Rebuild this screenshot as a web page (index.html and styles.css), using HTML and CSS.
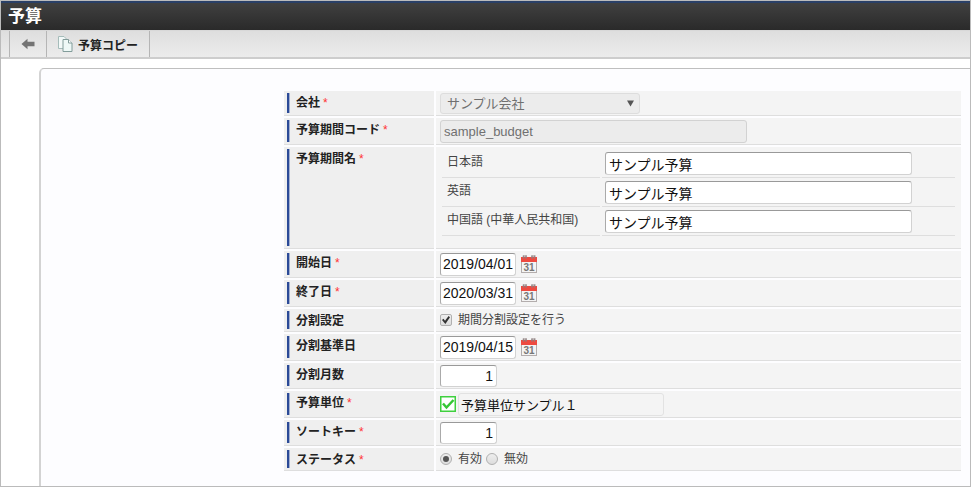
FILE: index.html
```
<!DOCTYPE html>
<html lang="ja">
<head>
    <meta charset="UTF-8">
    <meta name="viewport" content="width=device-width, initial-scale=1.0">
    <title>予算</title>
    <link rel="stylesheet" href="styles.css">
</head>
<body>
    <header class="title-bar">
        <h1>予算</h1>
    </header>

    <nav class="toolbar">
        <button type="button" class="btn-back" aria-label="戻る">
            <svg width="14" height="12" viewBox="0 0 14 12"><path d="M0.5 6L6.5 0.7V3.7H13.5V8.3H6.5V11.3Z" fill="#747474"/></svg>
        </button>
        <button type="button" class="btn-copy">
            <svg width="15" height="16" viewBox="0 0 15 16">
                <path d="M0.5 0.5h5.5l3 3v9h-8.5z" fill="#f3f9f8" stroke="#a5bcba"/>
                <path d="M5 3.5h5.5l3.5 3.5v8.5h-9z" fill="#eef8f6" stroke="#829c9a"/>
                <path d="M10.5 3.5v3.5h3.5" fill="#fff" stroke="#829c9a"/>
            </svg>
            <span>予算コピー</span>
        </button>
    </nav>

    <main class="panel">
        <form>
            <table class="form-table">
                <tr class="row-short">
                    <th><label for="company">会社</label><span class="required">*</span></th>
                    <td>
                        <span class="select-box">
                            <select id="company" disabled>
                                <option>サンプル会社</option>
                            </select>
                            <svg width="7" height="7" viewBox="0 0 7 7"><path d="M0 0.5H7L3.5 6.5Z" fill="#555"/></svg>
                        </span>
                    </td>
                </tr>
                <tr>
                    <th><label for="periodCode">予算期間コード</label><span class="required">*</span></th>
                    <td><input type="text" id="periodCode" class="input-long" value="sample_budget" disabled></td>
                </tr>
                <tr>
                    <th>予算期間名<span class="required">*</span></th>
                    <td class="cell-locale">
                        <table class="locale-table">
                            <tr>
                                <td><label for="nameJa">日本語</label></td>
                                <td><input type="text" id="nameJa" class="input-long" value="サンプル予算"></td>
                            </tr>
                            <tr>
                                <td><label for="nameEn">英語</label></td>
                                <td><input type="text" id="nameEn" class="input-long" value="サンプル予算"></td>
                            </tr>
                            <tr>
                                <td><label for="nameZh">中国語 (中華人民共和国)</label></td>
                                <td><input type="text" id="nameZh" class="input-long" value="サンプル予算"></td>
                            </tr>
                        </table>
                    </td>
                </tr>
                <tr>
                    <th><label for="startDate">開始日</label><span class="required">*</span></th>
                    <td>
                        <div class="field">
                            <input type="text" id="startDate" class="input-date" value="2019/04/01">
                            <button type="button" class="btn-icon" aria-label="カレンダー">
                                <svg width="16" height="18" viewBox="0 0 16 18">
                                    <rect x="0.5" y="3.5" width="15" height="14" fill="#f4f4f4" stroke="#b3adad"/>
                                    <rect x="0" y="2" width="16" height="5" fill="#ee4a40"/>
                                    <path d="M2.5 0.5v3M5 0.5v3M11 0.5v3M13.5 0.5v3" stroke="#8d8080" stroke-width="1.5"/>
                                    <path d="M2 1h4M10.5 1h4" stroke="#a39797"/>
                                    <text class="calendar-day" x="8" y="16" text-anchor="middle">31</text>
                                </svg>
                            </button>
                        </div>
                    </td>
                </tr>
                <tr>
                    <th><label for="endDate">終了日</label><span class="required">*</span></th>
                    <td>
                        <div class="field">
                            <input type="text" id="endDate" class="input-date" value="2020/03/31">
                            <button type="button" class="btn-icon" aria-label="カレンダー">
                                <svg width="16" height="18" viewBox="0 0 16 18">
                                    <rect x="0.5" y="3.5" width="15" height="14" fill="#f4f4f4" stroke="#b3adad"/>
                                    <rect x="0" y="2" width="16" height="5" fill="#ee4a40"/>
                                    <path d="M2.5 0.5v3M5 0.5v3M11 0.5v3M13.5 0.5v3" stroke="#8d8080" stroke-width="1.5"/>
                                    <path d="M2 1h4M10.5 1h4" stroke="#a39797"/>
                                    <text class="calendar-day" x="8" y="16" text-anchor="middle">31</text>
                                </svg>
                            </button>
                        </div>
                    </td>
                </tr>
                <tr class="row-choice">
                    <th>分割設定</th>
                    <td>
                        <div class="field choice">
                            <input type="checkbox" id="split" checked>
                            <label for="split">期間分割設定を行う</label>
                        </div>
                    </td>
                </tr>
                <tr>
                    <th><label for="splitDate">分割基準日</label></th>
                    <td>
                        <div class="field">
                            <input type="text" id="splitDate" class="input-date" value="2019/04/15">
                            <button type="button" class="btn-icon" aria-label="カレンダー">
                                <svg width="16" height="18" viewBox="0 0 16 18">
                                    <rect x="0.5" y="3.5" width="15" height="14" fill="#f4f4f4" stroke="#b3adad"/>
                                    <rect x="0" y="2" width="16" height="5" fill="#ee4a40"/>
                                    <path d="M2.5 0.5v3M5 0.5v3M11 0.5v3M13.5 0.5v3" stroke="#8d8080" stroke-width="1.5"/>
                                    <path d="M2 1h4M10.5 1h4" stroke="#a39797"/>
                                    <text class="calendar-day" x="8" y="16" text-anchor="middle">31</text>
                                </svg>
                            </button>
                        </div>
                    </td>
                </tr>
                <tr class="row-number">
                    <th><label for="splitMonths">分割月数</label></th>
                    <td><input type="text" id="splitMonths" class="input-number" value="1"></td>
                </tr>
                <tr>
                    <th><label for="budgetUnit">予算単位</label><span class="required">*</span></th>
                    <td>
                        <div class="field unit">
                            <button type="button" class="btn-icon" aria-label="予算単位を選択">
                                <svg width="16" height="16" viewBox="0 0 16 16">
                                    <rect x="0.75" y="0.75" width="14.5" height="14.5" fill="#fff" stroke="#3fd03f" stroke-width="1.5"/>
                                    <path d="M3 7.5L6.5 11.5L13.5 4" fill="none" stroke="#35c635" stroke-width="2.5"/>
                                </svg>
                            </button>
                            <input type="text" id="budgetUnit" class="input-unit" value="予算単位サンプル１" readonly>
                        </div>
                    </td>
                </tr>
                <tr class="row-number">
                    <th><label for="sortKey">ソートキー</label><span class="required">*</span></th>
                    <td><input type="text" id="sortKey" class="input-number" value="1"></td>
                </tr>
                <tr class="row-choice">
                    <th>ステータス<span class="required">*</span></th>
                    <td>
                        <div class="field choice">
                            <input type="radio" name="status" id="statusOn" checked>
                            <label for="statusOn">有効</label>
                            <input type="radio" name="status" id="statusOff">
                            <label for="statusOff">無効</label>
                        </div>
                    </td>
                </tr>
            </table>
        </form>
    </main>
</body>
</html>
```

FILE: styles.css
```
* {
    box-sizing: border-box;
}
body {
    display: flex;
    flex-direction: column;
    min-height: 100vh;
    margin: 0;
    border: 1px solid #bbb;
    background-color: #fff;
    color: #444;
    font-family: "Liberation Sans", "Noto Sans CJK JP", sans-serif;
    font-size: 12px;
    line-height: 16px;
}
button, input, select {
    margin: 0;
    font-family: inherit;
    font-size: 14px;
}
svg {
    display: block;
    flex: none;
}
.calendar-day {
    font-size: 10px;
    font-weight: bold;
    fill: #777;
}

/* ヘッダー */
.title-bar {
    border-top: 2px solid #2a4067;
    background: linear-gradient(#404040, #2a2a2a);
}
.title-bar h1 {
    margin: 0;
    padding: 0 7px;
    color: #fff;
    font-size: 17px;
    line-height: 27px;
}
.toolbar {
    display: flex;
    height: 29px;
    padding-left: 8px;
    border-top: 1px solid #d8d8d8;
    border-bottom: 2px solid #cdcdcd;
    background: linear-gradient(#dedede, #ececec);
}
.toolbar button {
    display: flex;
    align-items: center;
    border: none;
    border-right: 1px solid #b5b5b5;
    background: none;
    color: #222;
    font-size: 12px;
    font-weight: bold;
    cursor: pointer;
}
.toolbar .btn-back {
    padding: 0 11px;
    border-left: 1px solid #b5b5b5;
}
.toolbar .btn-copy {
    gap: 5px;
    padding: 0 11px;
}

/* 入力フォーム */
.panel {
    flex: 1;
    margin: 9px 0 0 38px;
    padding: 20px 7px 10px 241px;
    border: 1px solid #bfbfbf;
    border-left: 2px solid #d3d3d3;
    border-right: none;
    border-bottom: none;
    border-radius: 5px 0 0 0;
    background-color: #fdfdff;
}
.form-table {
    width: 100%;
    border-spacing: 2px;
    table-layout: fixed;
}
.form-table th {
    width: 150px;
    padding: 4px 0 0 12px;
    border-bottom: 1px solid #dedede;
    background: linear-gradient(90deg, #2b4a97 2px, #a3b0d0 2px) 3px 2px / 3px calc(100% - 4px) no-repeat #efefef;
    color: #222;
    text-align: left;
    vertical-align: top;
}
.form-table td {
    height: 27px;
    padding: 0 4px;
    border-bottom: 1px solid #dedede;
    background-color: #f4f4f4;
    vertical-align: middle;
}
.form-table .row-short td {
    height: 25px;
}
.form-table .row-number td {
    height: 26px;
}
.form-table .row-choice td {
    height: 23px;
}
.form-table .cell-locale {
    height: 102px;
    padding: 2px 4px;
    vertical-align: top;
}
.required {
    margin-left: 3px;
    color: #f33;
    font-weight: normal;
}
.form-table .locale-table {
    width: 100%;
    border-spacing: 2px 0;
}
.form-table .locale-table td {
    height: 29px;
    padding: 3px 3px 2px;
}
.form-table .locale-table td:first-child {
    width: 158px;
    padding: 5px 5px 4px;
    vertical-align: top;
}

/* 入力部品 */
input[type="text"] {
    display: block;
    height: 23px;
    padding: 0 3px;
    border: 1px solid #d2d2d2;
    border-top-color: #999;
    border-left-color: #aaa;
    border-radius: 3px;
    background-color: #fff;
    color: #111;
}
input[type="text"].input-long {
    width: 307px;
}
input[type="text"]:disabled {
    border-color: #d2d2d2;
    background-color: #ececec;
    color: #707070;
    font-size: 13px;
}
input[type="text"].input-date {
    width: 76px;
    padding: 0 2px;
}
input[type="text"].input-number {
    width: 57px;
    height: 22px;
    text-align: right;
}
input[type="text"].input-unit {
    width: 206px;
    padding: 0 2px;
    border-color: #e2e2e2;
    background-color: #f4f4f4;
    font-size: 13px;
}
.select-box {
    display: block;
    position: relative;
    width: 200px;
}
.select-box select {
    display: block;
    width: 100%;
    height: 21px;
    padding: 0 6px;
    appearance: none;
    border: 1px solid #ddd;
    border-radius: 3px;
    background-color: #ececec;
    color: #707070;
    font-size: 13px;
    opacity: 1;
}
.select-box svg {
    position: absolute;
    top: 7px;
    right: 6px;
}
.field {
    display: flex;
    align-items: center;
    gap: 5px;
}
.field.unit {
    gap: 2px;
}
.field.choice {
    gap: 0;
}
.choice label {
    padding: 0 4px 0 6px;
}
.btn-icon {
    padding: 0;
    border: none;
    background: none;
    cursor: pointer;
}
input[type="checkbox"], input[type="radio"] {
    display: grid;
    place-items: center;
    width: 12px;
    height: 12px;
    appearance: none;
    border: 1px solid #b0b0b0;
    border-radius: 2px;
    background: linear-gradient(#eee, #ddd);
}
input[type="radio"] {
    border-radius: 50%;
}
input[type="checkbox"]:checked::before {
    content: "";
    width: 8px;
    height: 8px;
    background-color: #333;
    clip-path: polygon(0 50%, 18% 34%, 38% 58%, 82% 0, 100% 16%, 42% 100%);
}
input[type="radio"]:checked::before {
    content: "";
    width: 6px;
    height: 6px;
    border-radius: 50%;
    background-color: #555;
}
```
